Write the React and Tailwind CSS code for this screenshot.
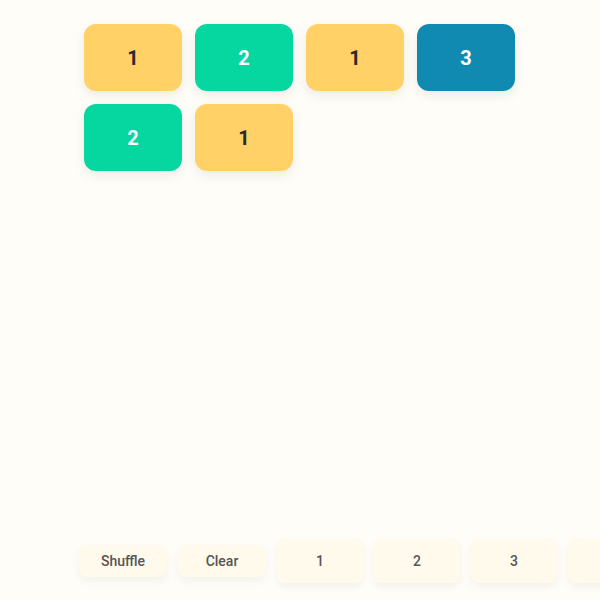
import React from "react";

const tiles = [1, 2, 1, 3, 2, 1];

const tileStyle = {
  1: "bg-[#ffd166] text-[#2a2a2a]",
  2: "bg-[#06d6a0] text-white",
  3: "bg-[#118ab2] text-white",
};

export default function App() {
  return (
    <div
      className="w-[600px] h-[600px] bg-[#fffdf8] flex flex-col overflow-hidden relative"
      style={{ fontFamily: "Roboto, 'Liberation Sans', sans-serif" }}
    >
      {/* Board */}
      <div className="pl-[84px] pt-[24px] flex-1">
        <div className="grid grid-cols-[repeat(4,98px)] gap-[13px]">
          {tiles.map((n, i) => (
            <div
              key={i}
              className={`h-[67px] rounded-[12px] flex items-center justify-center text-[20px] font-bold shadow-[0_4px_12px_rgba(0,0,0,0.08)] ${tileStyle[n]}`}
            >
              {n}
            </div>
          ))}
        </div>
      </div>

      {/* Controls */}
      <div className="flex items-center gap-[11px] pl-[79px] pb-[17px] whitespace-nowrap">
        <button className="shrink-0 w-[88px] h-[32px] rounded-[8px] bg-[#fffaeb] text-[#555] text-[14px] font-medium shadow-[0_4px_10px_rgba(0,0,0,0.05)]">
          Shuffle
        </button>
        <button className="shrink-0 w-[88px] h-[32px] rounded-[8px] bg-[#fffaeb] text-[#555] text-[14px] font-medium shadow-[0_4px_10px_rgba(0,0,0,0.05)]">
          Clear
        </button>
        {[1, 2, 3, 4].map((n) => (
          <button
            key={n}
            className="shrink-0 w-[86px] h-[44px] rounded-[8px] bg-[#fffaeb] text-[#555] text-[14px] font-medium shadow-[0_4px_10px_rgba(0,0,0,0.05)]"
          >
            {n === 4 ? "" : n}
          </button>
        ))}
      </div>
    </div>
  );
}
